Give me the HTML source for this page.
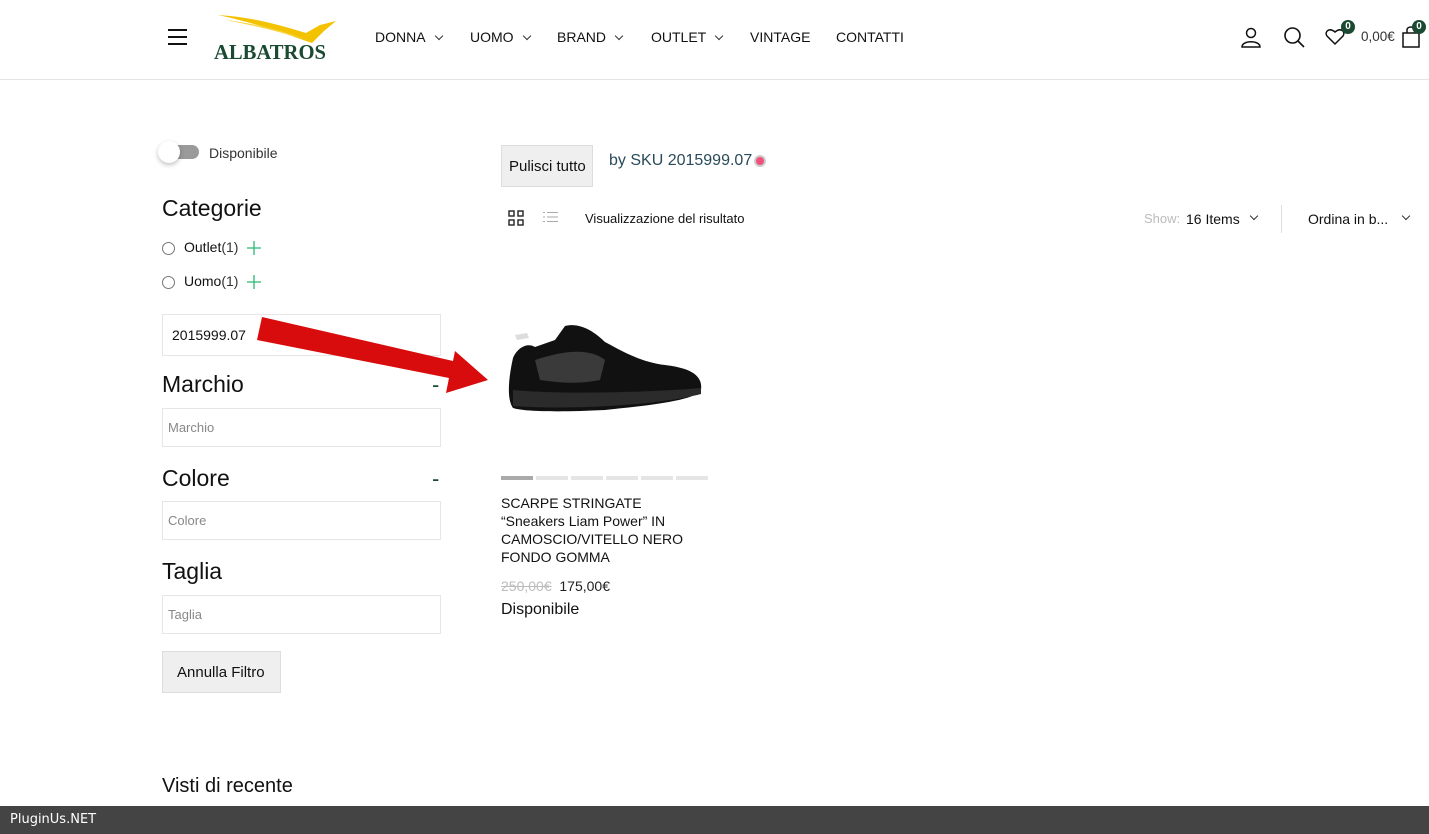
<!DOCTYPE html>
<html><head><meta charset="utf-8">
<style>
*{box-sizing:border-box;margin:0;padding:0}
body{width:1429px;height:834px;overflow:hidden;background:#fff;font-family:"Liberation Sans",Arial,sans-serif;color:#111;position:relative}
.abs{position:absolute}
header{position:absolute;left:0;top:0;width:1429px;height:80px;border-bottom:1px solid #e4e4e4}
.nav{font-size:14px;color:#111;top:29px}
.nav span.c{display:inline-block;width:6px;height:6px;border-right:1px solid #333;border-bottom:1px solid #333;transform:rotate(45deg);margin-left:10px;position:relative;top:-3px}
.box{border:1px solid #e6e6e6;background:#fff}
h3{font-weight:400;font-size:23px;position:absolute;color:#111}
.ph{font-size:13px;color:#888;position:absolute}
.radio{width:13px;height:13px;border:1px solid #777;border-radius:50%;position:absolute}
.btn{background:#efefef;border:1px solid #ddd;position:absolute}
</style></head><body>
<header>
<div class="abs" style="left:168px;top:29px;width:19px;height:2px;background:#111"></div>
<div class="abs" style="left:168px;top:36px;width:19px;height:2px;background:#111"></div>
<div class="abs" style="left:168px;top:43px;width:19px;height:2px;background:#111"></div>
<svg class="abs" style="left:214px;top:13px" width="124" height="48" viewBox="0 0 124 48">
<path d="M4 2 C35 4 60 10 92 20 L106 12 L122 8 L110 18 L98 30 C80 24 50 12 4 2Z" fill="#f3c200"/>
<path d="M10 7 C40 10 70 18 90 26 L96 28 C70 20 40 12 10 7Z" fill="#f8d440"/>
<text x="0" y="46" font-family="Liberation Serif,serif" font-weight="bold" font-size="21" fill="#1a4a32" textLength="112" lengthAdjust="spacingAndGlyphs">ALBATROS</text>
</svg>
<div class="abs nav" style="left:375px">DONNA<span class="c"></span></div>
<div class="abs nav" style="left:470px">UOMO<span class="c"></span></div>
<div class="abs nav" style="left:557px">BRAND<span class="c"></span></div>
<div class="abs nav" style="left:651px">OUTLET<span class="c"></span></div>
<div class="abs nav" style="left:750px">VINTAGE</div>
<div class="abs nav" style="left:836px">CONTATTI</div>
<svg class="abs" style="left:1240px;top:26px" width="22" height="22" viewBox="0 0 22 22" fill="none" stroke="#111" stroke-width="1.5"><circle cx="11" cy="7" r="4.5"/><path d="M2 21 C2 14 20 14 20 21Z"/></svg>
<svg class="abs" style="left:1283px;top:26px" width="22" height="22" viewBox="0 0 22 22" fill="none" stroke="#111" stroke-width="1.6"><circle cx="9.5" cy="9.5" r="7.5"/><path d="M15 15 L21 21"/></svg>
<svg class="abs" style="left:1325px;top:27px" width="20" height="20" viewBox="0 0 20 20" fill="none" stroke="#111" stroke-width="1.5"><path d="M10 17 L2 9 C-1 5 4 0 10 5 C16 0 21 5 18 9Z"/></svg>
<div class="abs" style="left:1341px;top:20px;width:14px;height:14px;border-radius:50%;background:#1a4a32;color:#fff;font-size:10px;font-weight:bold;text-align:center;line-height:14px">0</div>
<div class="abs" style="left:1361px;top:29px;font-size:13.5px;color:#333">0,00€</div>
<svg class="abs" style="left:1402px;top:26px" width="18" height="22" viewBox="0 0 18 22" fill="none" stroke="#111" stroke-width="1.5"><rect x="1" y="7" width="16" height="14"/><path d="M5 7 V4 C5 0 13 0 13 4 V7"/></svg>
<div class="abs" style="left:1412px;top:20px;width:14px;height:14px;border-radius:50%;background:#1a4a32;color:#fff;font-size:10px;font-weight:bold;text-align:center;line-height:14px">0</div>
</header>

<div class="abs" style="left:163px;top:145px;width:36px;height:14px;border-radius:7px;background:#9a9a9a"></div>
<div class="abs" style="left:158px;top:141px;width:22px;height:22px;border-radius:50%;background:#fff;box-shadow:0 2px 5px rgba(0,0,0,.25)"></div>
<div class="abs" style="left:209px;top:145px;font-size:14px;color:#333">Disponibile</div>
<h3 style="left:162px;top:195px">Categorie</h3>
<div class="radio" style="left:162px;top:242px"></div>
<div class="abs" style="left:184px;top:239px;font-size:14px">Outlet<span style="color:#333">(1)</span></div>
<svg class="abs" style="left:247px;top:241px" width="14" height="14" stroke="#2bb673" stroke-width="1.3"><path d="M7 0V14M0 7H14"/></svg>
<div class="radio" style="left:162px;top:276px"></div>
<div class="abs" style="left:184px;top:273px;font-size:14px">Uomo<span style="color:#333">(1)</span></div>
<svg class="abs" style="left:247px;top:275px" width="14" height="14" stroke="#2bb673" stroke-width="1.3"><path d="M7 0V14M0 7H14"/></svg>
<div class="box abs" style="left:162px;top:314px;width:279px;height:42px"></div>
<div class="abs" style="left:172px;top:327px;font-size:14px">2015999.07</div>
<h3 style="left:162px;top:371px">Marchio</h3>
<div class="abs" style="left:432px;top:372px;font-size:22px;color:#1a4a32">-</div>
<div class="box abs" style="left:162px;top:408px;width:279px;height:39px"></div>
<div class="ph" style="left:168px;top:420px">Marchio</div>
<h3 style="left:162px;top:465px">Colore</h3>
<div class="abs" style="left:432px;top:466px;font-size:22px;color:#1a4a32">-</div>
<div class="box abs" style="left:162px;top:501px;width:279px;height:39px"></div>
<div class="ph" style="left:168px;top:513px">Colore</div>
<h3 style="left:162px;top:558px">Taglia</h3>
<div class="box abs" style="left:162px;top:595px;width:279px;height:39px"></div>
<div class="ph" style="left:168px;top:607px">Taglia</div>
<div class="btn" style="left:162px;top:651px;width:119px;height:42px"></div>
<div class="abs" style="left:177px;top:664px;font-size:15px">Annulla Filtro</div>
<div class="abs" style="left:162px;top:775px;font-size:20px">Visti di recente</div>

<div class="btn" style="left:501px;top:145px;width:92px;height:42px"></div>
<div class="abs" style="left:509px;top:158px;font-size:15px">Pulisci tutto</div>
<div class="abs" style="left:609px;top:152px;font-size:16px;color:#2a4a5a">by SKU 2015999.07</div>
<div class="abs" style="left:754px;top:155px;width:12px;height:12px;border-radius:50%;background:#f0507a;border:2px solid #ccc"></div>
<svg class="abs" style="left:508px;top:210px" width="16" height="16" viewBox="0 0 16 16" fill="none" stroke="#222" stroke-width="1.4"><rect x="1" y="1" width="5" height="5"/><rect x="10" y="1" width="5" height="5"/><rect x="1" y="10" width="5" height="5"/><rect x="10" y="10" width="5" height="5"/></svg>
<svg class="abs" style="left:543px;top:211px" width="15" height="12" viewBox="0 0 15 12" stroke="#aaa" stroke-width="1"><path d="M0 1.5H2M4 1.5H15M0 6H2M4 6H15M0 10.5H2M4 10.5H15"/></svg>
<div class="abs" style="left:585px;top:211px;font-size:13px">Visualizzazione del risultato</div>
<div class="abs" style="left:1144px;top:211px;font-size:13px;color:#bbb">Show:</div>
<div class="abs" style="left:1186px;top:211px;font-size:14px">16 Items</div>
<div class="abs" style="left:1251px;top:213px;width:6px;height:6px;border-right:1px solid #333;border-bottom:1px solid #333;transform:rotate(45deg)"></div>
<div class="abs" style="left:1281px;top:205px;width:1px;height:28px;background:#ddd"></div>
<div class="abs" style="left:1308px;top:211px;font-size:14px">Ordina in b...</div>
<div class="abs" style="left:1403px;top:213px;width:6px;height:6px;border-right:1px solid #333;border-bottom:1px solid #333;transform:rotate(45deg)"></div>

<svg class="abs" style="left:505px;top:320px" width="200" height="100" viewBox="0 0 200 100">
<path d="M8 38 C12 28 22 22 30 27 L50 20 L60 6 C75 2 90 12 100 22 C115 30 135 42 160 45 C185 48 198 55 196 70 C190 80 150 85 100 90 C60 92 20 92 8 88 C2 80 3 60 8 38Z" fill="#111"/>
<path d="M8 70 C60 75 150 72 196 68 L196 74 C150 86 60 90 8 86Z" fill="#2b2b2b"/>
<path d="M30 40 C60 30 85 28 100 40 L95 60 C70 65 50 62 35 60Z" fill="#3a3a3a"/>
<path d="M10 15 L22 13 L24 18 L12 20Z" fill="#ddd"/>
</svg>
<div class="abs" style="left:501px;top:476px;width:32px;height:4px;background:#aaa"></div>
<div class="abs" style="left:536px;top:476px;width:32px;height:4px;background:#e5e5e5"></div>
<div class="abs" style="left:571px;top:476px;width:32px;height:4px;background:#e5e5e5"></div>
<div class="abs" style="left:606px;top:476px;width:32px;height:4px;background:#e5e5e5"></div>
<div class="abs" style="left:641px;top:476px;width:32px;height:4px;background:#e5e5e5"></div>
<div class="abs" style="left:676px;top:476px;width:32px;height:4px;background:#e5e5e5"></div>
<div class="abs" style="left:501px;top:494px;width:210px;font-size:14px;line-height:18px">SCARPE STRINGATE<br>“Sneakers Liam Power” IN CAMOSCIO/VITELLO NERO FONDO GOMMA</div>
<div class="abs" style="left:501px;top:578px;font-size:14px"><span style="color:#bbb;text-decoration:line-through">250,00€</span>&nbsp; <span style="color:#222">175,00€</span></div>
<div class="abs" style="left:501px;top:601px;font-size:16px">Disponibile</div>

<svg class="abs" style="left:0;top:0" width="1429" height="834"><polygon points="262,317 453,361 455,351 488,380 446,393 449,378 257,340" fill="#d80c0c"/></svg>

<div class="abs" style="left:0;top:806px;width:1429px;height:28px;background:#444"></div>
<div class="abs" style="left:10px;top:812px;font-size:13px;color:#fff;font-family:'DejaVu Sans',sans-serif">PluginUs.NET</div>
</body></html>
